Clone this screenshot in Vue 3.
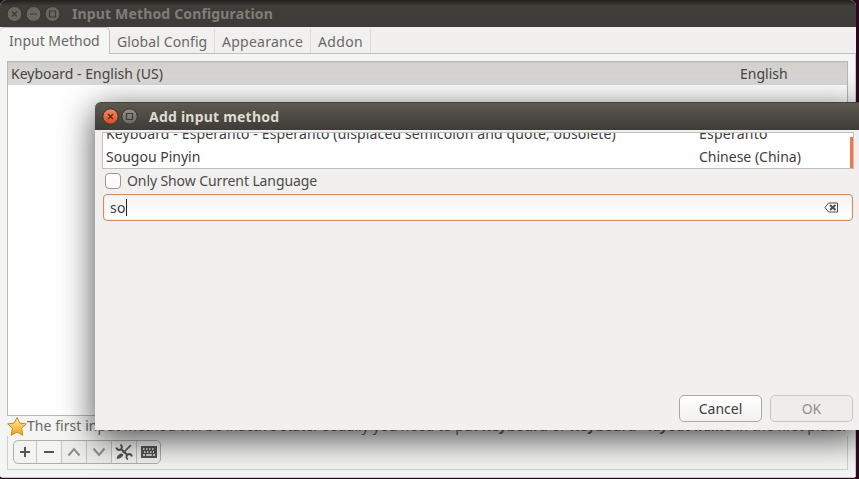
<script setup>
import { ref } from 'vue'

const tabs = [
  { label: 'Input Method', cls: 't-input' },
  { label: 'Global Config', cls: 't-global' },
  { label: 'Appearance', cls: 't-appearance' },
  { label: 'Addon', cls: 't-addon' },
]
const active = ref(0)
const query = ref('so')
const methods = [
  { name: 'Keyboard - Esperanto - Esperanto (displaced semicolon and quote, obsolete)', lang: 'Esperanto', cls: 'm-esp' },
  { name: 'Sougou Pinyin', lang: 'Chinese (China)', cls: 'm-sou' },
]
</script>

<template>
  <div class="desktop">
    <section class="window">
      <header class="titlebar">
        <svg class="controls" width="58" height="16" viewBox="0 0 58 16">
          <g fill="#686660" stroke="#34332f"><circle cx="7.5" cy="8" r="7.5" /><circle cx="26.5" cy="8" r="7.5" /><circle cx="45.5" cy="8" r="7.5" /></g>
          <path d="M5 5.5l5 5m0-5l-5 5M23 8h7M42.500 5h6v6h-6z" fill="none" stroke="#3b3a36" stroke-width="1.2" />
        </svg>
        <h1><span class="h-main">Input Method Configuration</span></h1>
      </header>
      <nav class="tabs">
        <button v-for="(t, i) in tabs" :key="t.label" :class="['tab', t.cls, { active: active === i }]" @click="active = i"><span>{{ t.label }}</span></button>
      </nav>
      <main class="page">
        <div class="list">
          <div class="row selected"><span class="kb">Keyboard - English (US)</span><span class="eng">English</span></div>
        </div>
        <div class="hint">
          <svg width="20" height="20" viewBox="0 0 20 20">
            <defs><linearGradient id="gold" x1="0" y1="0" x2="0" y2="1"><stop offset="0" stop-color="#fff3a2" /><stop offset=".5" stop-color="#fac85b" /><stop offset="1" stop-color="#f59a1b" /></linearGradient></defs>
            <path d="M10 1.500l2.700 5.600 6.600.8-4.800 4.400 1.300 7-5.800-3.200-6 3.200 1.500-7L.7 7.900l6.600-.8z" fill="url(#gold)" stroke="#c48a2c" stroke-linejoin="round" />
          </svg>
          <p>The first input method will be inactive state. Usually you need to put <b>Keyboard</b> or <b>Keyboard - <i>layout name</i></b> in the first place.</p>
        </div>
        <div class="toolframe">
          <div class="toolbar">
            <button><svg viewBox="0 0 24 22"><path d="M12 6v10M7 11h10" /></svg></button>
            <button><svg viewBox="0 0 24 22"><path d="M7 11h10" /></svg></button>
            <button class="dim"><svg viewBox="0 0 24 22"><path d="M6.500 14.500L12 8l5.500 6.500" /></svg></button>
            <button class="dim"><svg viewBox="0 0 24 22"><path d="M6.500 7.500L12 14l5.500-6.500" /></svg></button>
            <button><svg viewBox="0 0 24 22"><path d="M19 4l-6.500 6.500" stroke-width="1.700" /><path d="M12.500 10.500L11 12" stroke-width="1.500" /><path d="M9.500 8.500l6.500 6" stroke-width="2.200" /><path d="M8.500 3.500q1.800 1.500 1.300 3.300T7.500 9Q5 9 4.300 6.500M15.800 18.500q-1.800-1.500-1.300-3.300t2.300-2.200q2.500 0 3.200 2.500" stroke-width="1.900" /><path d="M4.500 18l1-3.200 3-2.300h1.500l1 1v1.500l-3 2.300z" fill="#555652" stroke="none" /></svg></button>
            <button><svg viewBox="0 0 24 22"><path d="M4 5h16v12H4z" fill="#555652" stroke="none" /><path d="M6 8h12M7 11h10" stroke="#f3f3f2" stroke-width="1.700" stroke-dasharray="1.500 1.500" /><path d="M6 14h2m1.200 0h5.600m1.200 0h2" stroke="#f3f3f2" stroke-width="1.700" /></svg></button>
          </div>
        </div>
      </main>
    </section>

    <section class="dialog">
      <header class="dialog-title">
        <svg width="36" height="17" viewBox="0 0 36 17">
          <defs>
            <linearGradient id="red" x1="0" y1="0" x2="0" y2="1"><stop offset="0" stop-color="#f58a66" /><stop offset="1" stop-color="#dc4a20" /></linearGradient>
            <linearGradient id="gray" x1="0" y1="0" x2="0" y2="1"><stop offset="0" stop-color="#93918a" /><stop offset="1" stop-color="#6a6860" /></linearGradient>
          </defs>
          <circle cx="8.500" cy="8.500" r="7.700" fill="url(#red)" stroke="#35332d" /><circle cx="27.500" cy="8.500" r="7.700" fill="url(#gray)" stroke="#35332d" />
          <path d="M6 6l5 5m0-5l-5 5" stroke="#522b1f" stroke-width="1.300" /><path d="M24.500 5.500h6v6h-6z" fill="none" stroke="#3a3934" stroke-width="1.200" />
        </svg>
        <h2><span class="h-dialog">Add input method</span></h2>
      </header>
      <div class="dialog-body">
        <div class="results">
          <div v-for="m in methods" :key="m.name" :class="['result', m.cls]"><span class="name">{{ m.name }}</span><span class="lang">{{ m.lang }}</span></div>
          <i class="thumb"></i>
        </div>
        <div class="check"><span class="box"></span><span class="only">Only Show Current Language</span></div>
        <div class="entry">
          <span class="query">{{ query }}</span><i class="caret"></i>
          <svg width="15" height="11" viewBox="0 0 15 11"><path d="M4.500 1h9v9h-9L1 5.500z" fill="none" stroke="#50504d" /><path d="M6 3l5.500 5M11.500 3L6 8" stroke="#50504d" stroke-width="2" /></svg>
        </div>
        <footer><button><span class="cancel">Cancel</span></button><button class="disabled" disabled><span class="ok">OK</span></button></footer>
      </div>
    </section>
  </div>
</template>

<style>
body { overflow: hidden; }
</style>
<style scoped>
* { box-sizing: border-box; }
.desktop { position: relative; width: 859px; height: 479px; overflow: hidden; background: #2c0820; font: 14px/20px "Noto Sans", "Open Sans", sans-serif; color: #3c3c3c; }
span, p { white-space: nowrap; }
span { display: inline-block; }
button { font: inherit; color: inherit; padding: 0; margin: 0; }
.window { width: 856px; height: 478px; display: flex; flex-direction: column; background: #f1f0ee; border-bottom: 1px solid #c8c7c5; border-radius: 6px 6px 3px 3px; overflow: hidden; }
.titlebar { flex: none; height: 27px; display: flex; align-items: center; gap: 7px; padding-left: 7px; background: linear-gradient(#20201e, #3f3e39 6px, #3c3b37); color: #807d78; }
.controls { overflow: visible; }
h1, h2 { margin: 0; font-size: 14px; line-height: 20px; font-weight: 700; }
.h-main { letter-spacing: .15px; }
.h-dialog { letter-spacing: .22px; }
.tabs { flex: none; height: 27px; display: flex; align-items: flex-end; position: relative; border-bottom: 1px solid #c2c1bf; color: #696966; }
.tab { height: 24px; border: 0; border-right: 1px solid #dcdbd9; background: none; text-align: left; padding: 2px 0 0 7px; }
.tab.active { height: 27px; margin-bottom: -1px; background: #f5f5f4; border: 1px solid #c2c1bf; border-left: 0; border-bottom: 0; border-radius: 5px 5px 0 0; padding: 0 0 0 9px; }
.t-input { width: 110px; }
.t-global { width: 105px; letter-spacing: .1px; }
.t-appearance { width: 96px; letter-spacing: .25px; }
.t-addon { width: 60px; letter-spacing: .35px; }
.page { flex: 1; padding: 7px 7px 8px; display: flex; flex-direction: column; background: #f5f5f4; border: 1px solid #c8c7c5; border-width: 0 1px 0 0; }
.list { height: 355px; border: 1px solid #b8b7b4; background: white; }
.row { height: 23px; display: flex; align-items: center; padding-left: 3px; }
.selected { background: linear-gradient(#d1cfcb, #dcdbd9); color: #454543; }
.kb { width: 729px; }
.hint { height: 20px; display: flex; color: #696966; }
.hint svg { flex: none; }
.hint p { margin: 0; letter-spacing: .06px; }
.toolframe { height: 34px; border: 1px solid #d0cfcd; border-top: 0; padding: 4px 5px; }
.toolbar { display: grid; grid-template-columns: 23px repeat(4, 25px) 23px; width: 148px; height: 24px; border: 1px solid #b0afad; border-radius: 5px; overflow: hidden; background: #f3f3f2; }
.toolbar button { border: 0; border-right: 1px solid #c5c4c2; background: none; display: flex; align-items: center; justify-content: center; }
.toolbar button:last-child { border: 0; }
.toolbar svg { flex: none; width: 24px; height: 22px; fill: none; stroke: #555652; stroke-width: 2; }
.toolbar .dim svg { stroke: #92908e; }
.toolbar .dim { background: #eeeeec; }
.dialog { position: absolute; left: 95px; top: 102px; width: 768px; height: 328px; display: flex; flex-direction: column; background: #f1f0ee; border-radius: 6px 0 0; box-shadow: 0 8px 34px rgba(0, 0, 0, .72); }
.dialog-title { height: 28px; display: flex; align-items: center; gap: 12px; padding-left: 7px; background: linear-gradient(#5c594f, #3d3c37); border-top: 1px solid #45443d; border-radius: 6px 0 0; color: #dfdbd2; }
.dialog-title h2 { margin-left: -1px; }
.dialog-body { flex: 1; padding: 2px 10px 8px 7px; display: flex; flex-direction: column; }
.results { position: relative; width: 752px; height: 37px; overflow: hidden; border: 1px solid #c0bfbd; background: white; display: flex; flex-direction: column; justify-content: flex-end; }
.result { flex: none; height: 23px; display: flex; align-items: center; padding-left: 3px; }
.name { width: 593px; flex: none; }
.m-esp .name { letter-spacing: .14px; }
.m-esp .lang { letter-spacing: .25px; }
.thumb { position: absolute; right: 0; top: 4px; width: 3px; height: 31px; background: #f07746; }
.check { height: 25px; display: flex; align-items: center; gap: 6px; padding: 0 0 1px 3px; color: #4c4c4a; }
.only { letter-spacing: -.1px; }
.box { width: 16px; height: 16px; border: 1px solid #999794; border-radius: 4px; background: linear-gradient(#fff, #f8f8f8); }
.entry { width: 750px; height: 27px; margin-left: 1px; display: flex; align-items: center; padding: 0 13px 0 6px; border: 1px solid #dc8764; border-radius: 4px; background: linear-gradient(#f4f4f4, #fff); box-shadow: inset 0 0 0 1px #faebe5; }
.query { letter-spacing: .3px; }
.caret { width: 1px; height: 17px; background: #222; }
.entry svg { margin-left: auto; }
footer { margin-top: auto; display: flex; gap: 8px; padding-left: 577px; }
footer button { width: 83px; height: 27px; border: 1px solid #aaa9a6; border-radius: 5px; background: linear-gradient(#fff, #f2f1ef); }
footer .disabled { border-color: #c6c5c2; background: #eeedeb; color: #91908e; }
</style>
